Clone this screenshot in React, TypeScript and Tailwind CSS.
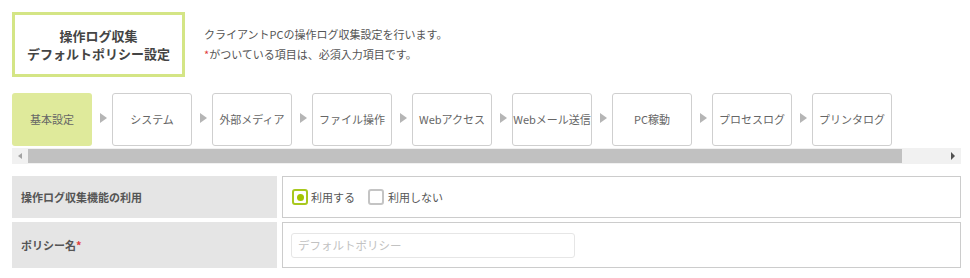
import { useState } from "react";

const tabs = [
  "基本設定",
  "システム",
  "外部メディア",
  "ファイル操作",
  "Webアクセス",
  "Webメール送信",
  "PC稼動",
  "プロセスログ",
  "プリンタログ",
];

function Arrow() {
  return (
    <div className="w-[20px] flex items-center justify-center">
      <div className="w-0 h-0 border-y-[5px] border-y-transparent border-l-[7px] border-l-[#b5b5b5] ml-[2px] mb-[4px]" />
    </div>
  );
}

export default function App() {
  const [active, setActive] = useState(0);
  const [enabled, setEnabled] = useState(true);
  const [name, setName] = useState("");

  return (
    <div
      className="w-[970px] h-[278px] bg-white pl-[12px] pr-[9px] pt-[12px] text-[#555]"
      style={{ fontFamily: '"Noto Sans CJK JP", "Noto Sans", sans-serif' }}
    >
      {/* header */}
      <div className="flex items-start">
        <div className="w-[173px] h-[65px] border-[3px] border-[#d4e585] flex flex-col items-center justify-center text-[13px] font-bold leading-[18px] text-[#444]">
          <div>操作ログ収集</div>
          <div>デフォルトポリシー設定</div>
        </div>
        <div className="ml-[19px] pt-[12px] text-[11px] leading-[20px] text-[#555]">
          <div>クライアントPCの操作ログ収集設定を行います。</div>
          <div>
            <span className="text-[#e03c3c]">*</span>がついている項目は、必須入力項目です。
          </div>
        </div>
      </div>

      {/* tabs */}
      <div className="mt-[16px] flex">
        {tabs.map((t, i) => (
          <div key={t} className="flex">
            <button
              onClick={() => setActive(i)}
              className={
                i === active
                  ? "w-[80px] h-[53px] rounded-[3px] bg-[#dfea9b] text-[11px] text-[#666] flex items-center justify-center whitespace-nowrap"
                  : "w-[80px] h-[53px] rounded-[3px] border border-[#cfcfcf] bg-white text-[11px] text-[#666] flex items-center justify-center whitespace-nowrap"
              }
            >
              {t}
            </button>
            {i < tabs.length - 1 && <Arrow />}
          </div>
        ))}
      </div>

      {/* scrollbar */}
      <div className="mt-[2px] h-[16px] bg-[#f1f1f1] flex items-center">
        <div className="w-[16px] flex justify-center">
          <div className="w-0 h-0 border-y-[3px] border-y-transparent border-r-[4px] border-r-[#a3a3a3]" />
        </div>
        <div className="w-[874px] h-[14px] bg-[#c1c1c1]" />
        <div className="flex-1 flex justify-end pr-[6px]">
          <div className="w-0 h-0 border-y-[4px] border-y-transparent border-l-[4px] border-l-[#505050]" />
        </div>
      </div>

      {/* form */}
      <div className="mt-[12px] flex flex-col gap-[4px]">
        <div className="flex gap-[5px] h-[42px]">
          <div className="w-[265px] bg-[#e5e5e5] flex items-center pl-[9px] text-[11px] font-bold text-[#555]">
            操作ログ収集機能の利用
          </div>
          <div className="flex-1 border border-[#cccccc] flex items-center pl-[9px] text-[11px] text-[#555]">
            <label className="flex items-center cursor-pointer" onClick={() => setEnabled(true)}>
              <span
                className={
                  enabled
                    ? "w-[16px] h-[16px] rounded-[3px] border-2 border-[#a8c81e] flex items-center justify-center"
                    : "w-[16px] h-[16px] rounded-[3px] border-2 border-[#c4c4c4] flex items-center justify-center"
                }
              >
                {enabled && <span className="w-[7px] h-[7px] rounded-full bg-[#a3c400]" />}
              </span>
              <span className="ml-[3px]">利用する</span>
            </label>
            <label className="flex items-center cursor-pointer ml-[13px]" onClick={() => setEnabled(false)}>
              <span
                className={
                  !enabled
                    ? "w-[16px] h-[16px] rounded-[3px] border-2 border-[#a8c81e] flex items-center justify-center"
                    : "w-[16px] h-[16px] rounded-[3px] border-2 border-[#c4c4c4] flex items-center justify-center"
                }
              >
                {!enabled && <span className="w-[7px] h-[7px] rounded-full bg-[#a3c400]" />}
              </span>
              <span className="ml-[4px]">利用しない</span>
            </label>
          </div>
        </div>
        <div className="flex gap-[5px] h-[46px]">
          <div className="w-[265px] bg-[#e5e5e5] flex items-center pl-[9px] text-[11px] font-bold text-[#555]">
            ポリシー名<span className="text-[#e03c3c]">*</span>
          </div>
          <div className="flex-1 border border-[#cccccc] flex items-center pl-[8px]">
            <input
              value={name}
              onChange={(e) => setName(e.target.value)}
              placeholder="デフォルトポリシー"
              className="w-[284px] h-[25px] rounded-[3px] border border-[#e6e6e6] px-[6px] text-[11.5px] text-[#555] placeholder:text-[#c2c2c2] outline-none"
            />
          </div>
        </div>
      </div>
    </div>
  );
}
